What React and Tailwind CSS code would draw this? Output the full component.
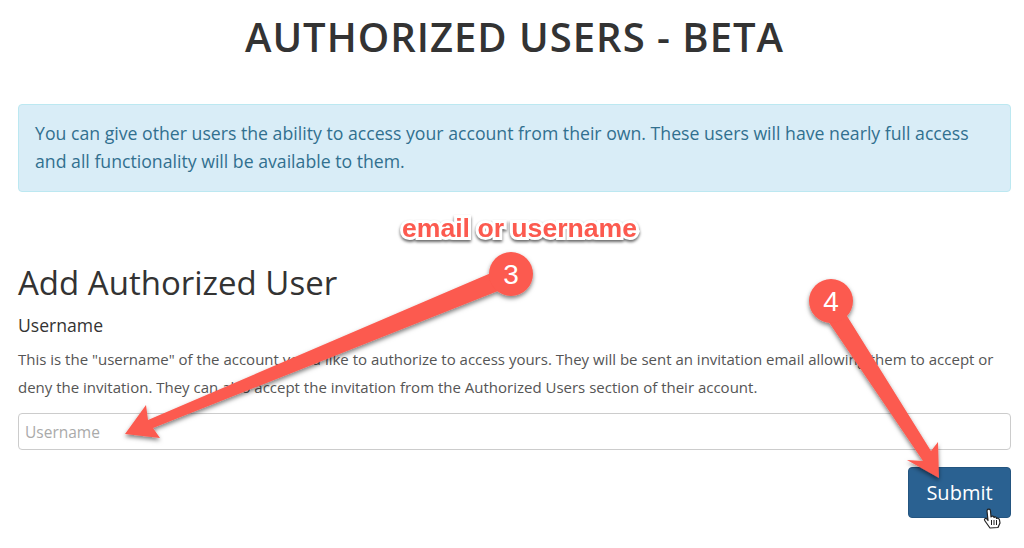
import React from "react";

function Overlay() {
  return (
    <svg className="absolute left-0 top-0 pointer-events-none" width="1024" height="548" viewBox="0 0 1024 548">
      <defs>
        <filter id="sh" x="-20%" y="-20%" width="140%" height="140%">
          <feDropShadow dx="0" dy="2.5" stdDeviation="2" floodColor="#000" floodOpacity="0.5" />
        </filter>
      </defs>
      <g filter="url(#sh)" fill="#fc5a4f">
        <path d="M505 267 L513 285 L153 428 L160 438 L125 434 L146 405 L148 420 Z" />
        <circle cx="511" cy="274" r="22" />
      </g>
      <g filter="url(#sh)" fill="#fc5a4f">
        <path d="M826 318 L842 308 L931 451 L938 442 L939 478 L907 460 L923 461 Z" />
        <circle cx="831" cy="301" r="22" />
      </g>
      <g fill="#fff" stroke="#222" strokeWidth="1.200" strokeLinejoin="round">
        <path d="M987 511 C987 508.500 990.500 508.500 990.500 511 L991 517 C992 515.500 994 516 994 517.500 C995 516.500 996.500 517 996.500 518.500 C997.500 517.800 999.500 518.500 999.500 520 L1000 523 L998 527.500 L990 528 L985 521 C983.500 519 985.500 517.500 987 519 L988 520.500 Z" />
      </g>
      <path d="M991.500 520 V525 M994 520 V525 M996.500 520 V525" stroke="#222" strokeWidth="1" fill="none" />
    </svg>
  );
}

export default function App() {
  return (
    <div className="relative w-[1024px] h-[548px] overflow-hidden bg-white font-['Open_Sans',sans-serif] text-[#333]">
      <div className="pl-[18px] pr-[13px] flex flex-col">
        <h1 className="mt-[12px] h-[50px] text-center text-[40px] leading-[50px] font-semibold tracking-[1px] text-[#333]">
          AUTHORIZED USERS - BETA
        </h1>
        <div className="mt-[42px] h-[88px] rounded-[4px] border border-[#bce8f1] bg-[#d9edf7] px-[16px] pt-[14px] text-[17.680px] leading-[28px] text-[#31708f]">
          You can give other users the ability to access your account from their own. These users will have nearly full access and all functionality will be available to them.
        </div>
        <h2 className="mt-[69px] text-[33px] leading-[44px] text-[#333]">Add Authorized User</h2>
        <label className="mt-[9px] text-[17.600px] leading-[22px] font-normal text-[#333]">Username</label>
        <p className="mt-[9px] text-[15px] leading-[28px] text-[#555]">
          This is the "username" of the account you'd like to authorize to access yours. They will be sent an invitation email allowing them to accept or deny the invitation. They can also accept the invitation from the Authorized Users section of their account.
        </p>
        <input
          readOnly
          placeholder="Username"
          className="mt-[12px] h-[37px] rounded-[4px] border border-[#ccc] bg-white px-[6px] text-[15.500px] placeholder:text-[#aaa] outline-none"
        />
        <div className="mt-[17px] flex justify-end">
          <button className="h-[51px] w-[103px] rounded-[4px] border border-[#245580] bg-[#2a6191] text-[20px] text-white">
            Submit
          </button>
        </div>
      </div>
      <Overlay />
      <span className="absolute left-[402px] top-[212px] font-['Liberation_Sans',sans-serif] text-[26.600px] leading-[32px] font-bold text-[#fc5a4f] [-webkit-text-stroke:6px_white] [paint-order:stroke_fill] [filter:drop-shadow(0_2px_1.500px_rgba(0,0,0,0.6))]">
        email or username
      </span>
      <span className="absolute left-[489px] top-[259px] w-[44px] text-center font-['Liberation_Sans',sans-serif] text-[28px] leading-[32px] text-white">3</span>
      <span className="absolute left-[809px] top-[286px] w-[44px] text-center font-['Liberation_Sans',sans-serif] text-[28px] leading-[32px] text-white">4</span>
    </div>
  );
}
